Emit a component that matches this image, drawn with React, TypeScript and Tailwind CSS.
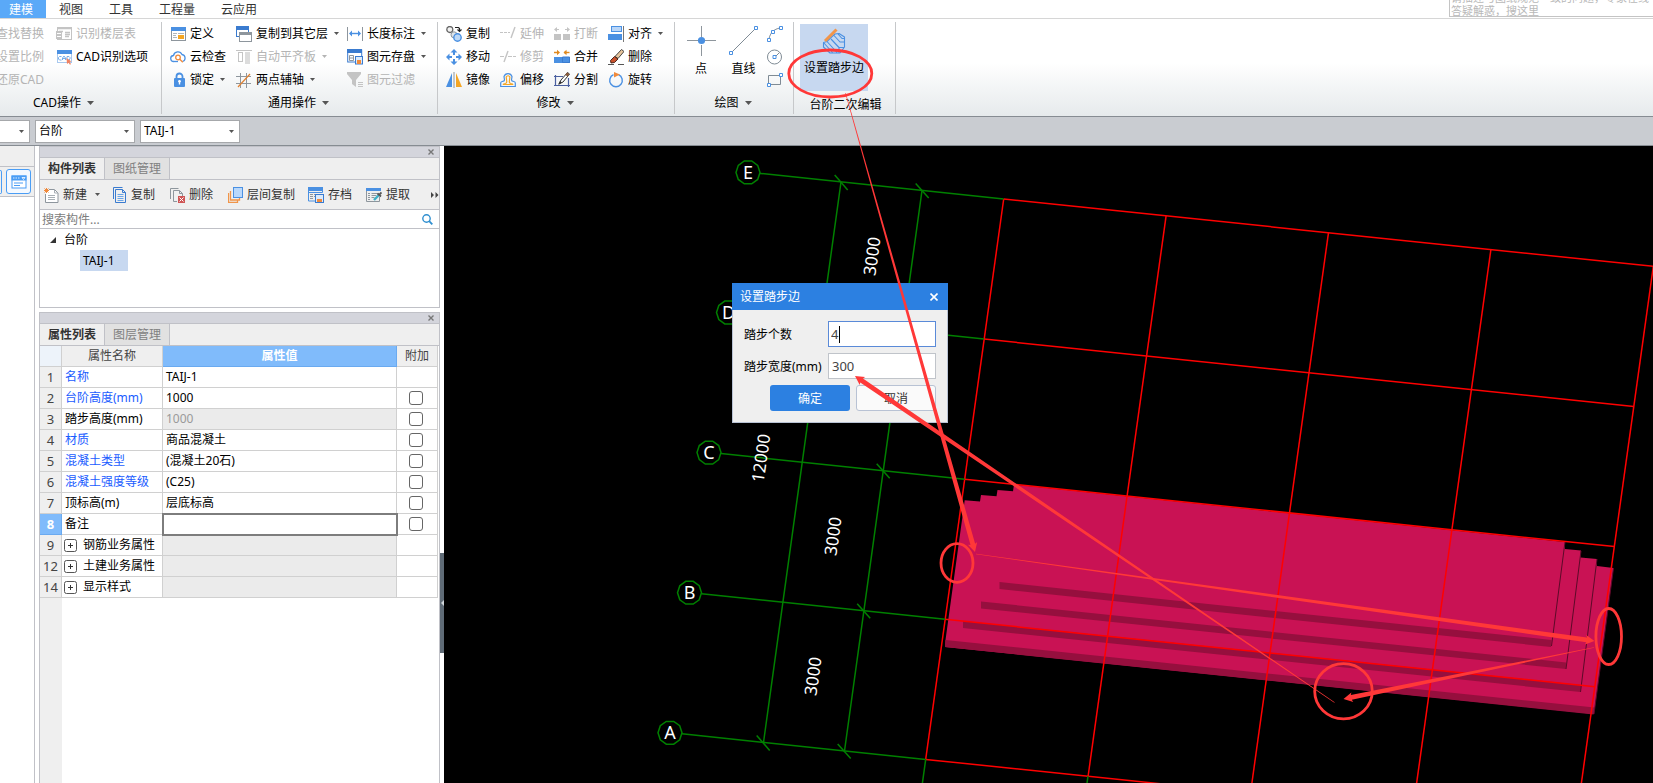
import type { ReactNode } from 'react';

const BLUE = '#4a90e2';
const DEEP = '#3a7bcf';
const GREY = '#8e969d';
const PALE = '#c4c4c4';
const ORANGE = '#f5a623';

function Icon({ children, w = 16, h = 16 }: { children: ReactNode; w?: number; h?: number }) {
  return (
    <svg width={w} height={h} viewBox={`0 0 ${w} ${h}`} fill="none" className="shrink-0" aria-hidden="true">
      {children}
    </svg>
  );
}

function Caret({ big = false, color = '#555555' }: { big?: boolean; color?: string }) {
  return big ? (
    <svg width="7" height="4" viewBox="0 0 7 4" className="shrink-0" aria-hidden="true">
      <path d="M0 0h7L3.5 4z" fill={color} />
    </svg>
  ) : (
    <svg width="5" height="3" viewBox="0 0 5 3" className="shrink-0" aria-hidden="true">
      <path d="M0 0h5L2.5 3z" fill={color} />
    </svg>
  );
}

/* ---------- ribbon icons ---------- */

const icons: Record<string, ReactNode> = {
  floorTable: (
    <Icon>
      <rect x="1.5" y="1.5" width="14" height="12" stroke={PALE} />
      <path d="M1 2.5h15M3 5.5h4M9 6.5h5M9 8.5h5M9 10.5h4" stroke={PALE} strokeWidth="1.4" />
      <rect x="0" y="5" width="6" height="8" fill={PALE} />
      <path d="M1 7.5h4M1 10.5h4" stroke="#fff" />
    </Icon>
  ),
  cadOption: (
    <Icon>
      <rect x="1.5" y="1.5" width="14" height="12" stroke="#a9c9ef" />
      <rect x="1" y="1" width="15" height="4" fill={BLUE} />
      <path d="M5.5 7.5h-2l-1 1v1.500l1 1h2M6.500 11V9l1.500-2 1.500 2v2M6.500 9.500h3M11 7.500v3.500h2l1-1V8.500l-1-1z" stroke="#6aa5e8" strokeWidth=".9" />
      <path d="M10.500 9l5 3.500-2 .5 1.500 2-1 .7-1.500-2-1.500 1.200z" fill="#f08060" />
    </Icon>
  ),
  define: (
    <Icon>
      <rect x="1.500" y="1.500" width="14" height="13" stroke={GREY} fill="#fff" />
      <rect x="1" y="1" width="15" height="4" fill={BLUE} />
      <path d="M3 7.500h4M3 9.500h3M3 11.500h4M8 7.500h6" stroke="#b0b6bb" />
      <rect x="8" y="9" width="6" height="4" fill={ORANGE} />
    </Icon>
  ),
  cloud: (
    <Icon>
      <path d="M4 12.500a3 3 0 0 1-.5-6 4.500 4.500 0 0 1 8.500-1 3.600 3.600 0 0 1 .5 7" stroke={BLUE} strokeWidth="1.300" />
      <circle cx="8" cy="8.500" r="2.300" stroke="#f08a3c" strokeWidth="1.300" />
      <path d="M9.800 10.300l3 3" stroke="#f08a3c" strokeWidth="1.300" />
      <path d="M4 12.500h4" stroke={BLUE} strokeWidth="1.300" />
    </Icon>
  ),
  lock: (
    <Icon>
      <path d="M6.500 7V4.500a3 3 0 0 1 6 0V7" stroke={BLUE} strokeWidth="1.800" />
      <rect x="4" y="6" width="11" height="9" rx="1" fill={BLUE} />
      <path d="M9.500 8.500v4" stroke="#fff" strokeWidth="1.400" />
      <circle cx="9.500" cy="9.300" r="1.300" fill="#fff" />
    </Icon>
  ),
  copyFloor: (
    <Icon>
      <rect x=".5" y=".5" width="12" height="10" stroke={DEEP} fill="#fff" />
      <rect x="0" y="0" width="13" height="4" fill={DEEP} />
      <rect x="3.500" y="6.500" width="12" height="9" stroke={GREY} fill="#fff" />
      <rect x="3" y="6" width="13" height="3" fill={GREY} />
    </Icon>
  ),
  alignSlab: (
    <Icon>
      <path d="M0 1.500h16" stroke={PALE} />
      <rect x="2.500" y="3.500" width="4" height="9" stroke={PALE} />
      <rect x="9" y="3" width="5" height="12" fill="#dcdcdc" />
    </Icon>
  ),
  axis: (
    <Icon>
      <path d="M0 4.500h15M0 11.500h15M4.500 1v15M10.500 1v15" stroke={GREY} />
      <path d="M2 15L14 2" stroke="#e08030" strokeWidth="1.200" />
    </Icon>
  ),
  dimension: (
    <Icon>
      <path d="M.5 1v14M15.500 1v14" stroke={GREY} />
      <path d="M3 7.500h10" stroke={BLUE} strokeWidth="1.400" />
      <path d="M2 7.500l3-3v6zM14 7.500l-3-3v6z" fill={BLUE} />
    </Icon>
  ),
  saveElement: (
    <Icon>
      <rect x=".7" y="1" width="14" height="12" stroke={DEEP} fill="#fff" />
      <rect x="0" y="0" width="15" height="4" fill={DEEP} />
      <path d="M2.500 6.500h4v5h-4zM3 9h3" stroke={GREY} />
      <rect x="8.500" y="7.500" width="7" height="7.500" stroke={DEEP} fill="#dcebfb" />
      <rect x="10" y="11" width="4" height="4" fill="#f08a3c" />
    </Icon>
  ),
  filter: (
    <Icon>
      <path d="M0 0h14v2L9 8v7l-4-3V8L0 2z" fill={PALE} />
      <path d="M11 10.500h5M11 12.500h5M11 14.500h5" stroke={PALE} />
    </Icon>
  ),
  copy: (
    <Icon>
      <circle cx="3.800" cy="3.500" r="3" stroke="#666" strokeWidth="1.300" fill="#f2f2f2" />
      <circle cx="8" cy="8.800" r="3" stroke={GREY} fill="#dce3e9" />
      <circle cx="11.500" cy="11.500" r="3.700" stroke={BLUE} fill="#bcd8f7" strokeWidth="1.400" />
      <path d="M9 1.500h3.500l1 1v2M11.500 3.500l2 2 2-2" stroke="#222" strokeWidth="1.200" />
    </Icon>
  ),
  move: (
    <Icon>
      <path d="M8 0l3.500 3.500H9V6H7V3.500H4.500zM8 16l3.500-3.500H9V10H7v2.500H4.500zM0 8l3.500-3.500V7H6v2H3.500v2.500zM16 8l-3.500-3.500V7H10v2h2.500v2.500z" fill={BLUE} />
    </Icon>
  ),
  mirror: (
    <Icon>
      <path d="M6 1v14H0z" fill={BLUE} />
      <path d="M10 1v14h6z" fill={ORANGE} />
      <path d="M8 0v16" stroke={GREY} />
    </Icon>
  ),
  extend: (
    <Icon>
      <path d="M0 6.500h10" stroke={PALE} strokeDasharray="3 1" />
      <path d="M11 12l4-11" stroke={PALE} strokeWidth="1.400" />
    </Icon>
  ),
  trim: (
    <Icon>
      <path d="M0 7.500h5M8 7.500h8" stroke={PALE} strokeDasharray="4 1" strokeWidth="1.200" />
      <path d="M4 13L8 2" stroke={PALE} strokeWidth="1.400" />
    </Icon>
  ),
  offset: (
    <Icon>
      <path d="M.7 14.500v-3.500q0-1.300 1.500-1.500 2.300-.3 2.300-1.500l-.5-3.500a4.200 4.200 0 0 1 8 0l-.5 3.500q0 1.200 2.300 1.500 1.500.2 1.500 1.500v3.500z" stroke={BLUE} strokeWidth="1.200" />
      <path d="M3.300 12.500q0-.8 2-1 1.500-.3 1.500-1.700l-.6-4.800a2 2 0 0 1 3.700 0l-.6 4.800q0 1.400 1.500 1.700 2 .2 2 1z" stroke={ORANGE} strokeWidth="1.200" />
    </Icon>
  ),
  breakIt: (
    <Icon>
      <path d="M0 8h7v6H0zM9 8h7v6H9z" fill={PALE} />
      <path d="M1 3.500h4M11 3.500h4" stroke={PALE} />
      <path d="M0 3.500L3 1v5zM16 3.500L13 1v5z" fill={PALE} />
    </Icon>
  ),
  merge: (
    <Icon>
      <path d="M0 8h16v6H0z" fill={BLUE} />
      <path d="M8.500 8h7v5.500h-7z" stroke={DEEP} />
      <path d="M0 3.500h3M10 3.500h3" stroke="#e08a20" strokeWidth="1.400" />
      <path d="M6 3.500L3 .8v5.400zM9.500 3.500l3-2.700v5.400z" fill="#e08a20" />
      <path d="M12 3.500h3.500" stroke="#e08a20" strokeWidth="1.400" />
    </Icon>
  ),
  split: (
    <Icon>
      <path d="M1.500 3v11M0 4.500h9M0 13.500h16M14.500 6v9" stroke="#4a5fa0" strokeWidth="1.200" />
      <path d="M5 12l2-4 6.500-7.500 2 1.500L9 10z" stroke="#333" fill="#fff" />
      <path d="M13 .5L15.500 2 13.500 4.500 11.200 2.800z" fill="#8a5a3a" />
      <path d="M4 13l2-4 2 1.500z" fill="#333" />
    </Icon>
  ),
  align: (
    <Icon>
      <rect x="3.500" y=".5" width="10" height="5" stroke={BLUE} fill="#b9d6f8" />
      <rect x="0" y="8" width="14" height="6" fill={BLUE} />
      <path d="M15.500 0v16" stroke="#777" />
    </Icon>
  ),
  erase: (
    <Icon>
      <path d="M0 15.500h6M10 15.500h6" stroke="#555" />
      <path d="M7 7.500L13.500.5l2.500 2L10 9.500z" fill="#e6c49c" stroke="#333" strokeWidth=".9" />
      <path d="M2.500 11.500L6.500 7.500l3.500 2.500-3.500 3.500-3.500.5z" fill="#c8512c" stroke="#3a1a10" strokeWidth=".9" />
    </Icon>
  ),
  rotate: (
    <Icon>
      <path d="M10.500 2.600a6.300 6.300 0 1 1-5 0" stroke={BLUE} strokeWidth="1.400" />
      <path d="M6 0l6 2.500L6 5.500z" fill="#f08a3c" />
    </Icon>
  ),
};

type Command = { icon: string; label: string; menu?: boolean; off?: boolean };

function Cmd({ icon, label, menu, off }: Command) {
  return (
    <button type="button" disabled={off} className={`flex items-center gap-1 whitespace-nowrap text-left ${off ? 'text-[#b4b4b4]' : 'text-black'}`}>
      {icons[icon]}
      <span>{label}</span>
      {menu && <span className="pl-0.5"><Caret color={off ? '#b4b4b4' : '#555555'} /></span>}
    </button>
  );
}

function Group({ title, caret = true, className = '', titleClass = '', children }: { title: string; caret?: boolean; className?: string; titleClass?: string; children: ReactNode }) {
  return (
    <section className={`mb-0.5 mt-[3px] flex shrink-0 flex-col border-r border-[#c6c8ca] ${className}`}>
      <div className="h-[71px]">{children}</div>
      <h2 className={`flex h-[22px] items-center justify-center gap-1.5 ${titleClass}`}>
        {title}
        {caret && <Caret big />}
      </h2>
    </section>
  );
}

const generalCommands: Command[] = [
  { icon: 'define', label: '定义' },
  { icon: 'copyFloor', label: '复制到其它层', menu: true },
  { icon: 'dimension', label: '长度标注', menu: true },
  { icon: 'cloud', label: '云检查' },
  { icon: 'alignSlab', label: '自动平齐板', menu: true, off: true },
  { icon: 'saveElement', label: '图元存盘', menu: true },
  { icon: 'lock', label: '锁定', menu: true },
  { icon: 'axis', label: '两点辅轴', menu: true },
  { icon: 'filter', label: '图元过滤', off: true },
];

const modifyCommands: Command[] = [
  { icon: 'copy', label: '复制' },
  { icon: 'extend', label: '延伸', off: true },
  { icon: 'breakIt', label: '打断', off: true },
  { icon: 'align', label: '对齐', menu: true },
  { icon: 'move', label: '移动' },
  { icon: 'trim', label: '修剪', off: true },
  { icon: 'merge', label: '合并' },
  { icon: 'erase', label: '删除' },
  { icon: 'mirror', label: '镜像' },
  { icon: 'offset', label: '偏移' },
  { icon: 'split', label: '分割' },
  { icon: 'rotate', label: '旋转' },
];

function MenuBar() {
  return (
    <header className="flex h-[19px] shrink-0 overflow-hidden border-b border-[#d6d6d6] bg-white">
      <nav className="flex text-[12px] leading-[20px] text-[#333333]">
        <a href="#model" className="w-[46px] bg-[#5aa9f8] pl-[9px] text-white">建模</a>
        <a href="#view" className="ml-[13px] w-[50px]">视图</a>
        <a href="#tools" className="w-[50px]">工具</a>
        <a href="#quantity" className="w-[62px]">工程量</a>
        <a href="#cloud">云应用</a>
      </nav>
      <div className="ml-auto h-[17px] w-[204px] overflow-hidden border border-r-0 border-t-0 border-[#c4c4c4] pl-px text-[11px] leading-[13px] text-[#b8b8b8]">
        <p className="-mt-[9px] whitespace-nowrap">请描述与图纸规范一致的问题，专家在线<br />答疑解惑，搜这里</p>
      </div>
    </header>
  );
}

function Ribbon() {
  return (
    <div className="flex h-[98px] shrink-0 overflow-hidden border-b border-[#868c92] bg-linear-to-b from-white from-45% to-[#e6eaec]">
      <Group title="CAD操作" className="w-[162px]" titleClass="pr-[34px]">
        <div className="grid grid-cols-[56px_1fr] grid-rows-[repeat(3,23px)]">
          <button type="button" disabled className="flex w-11 items-center justify-end overflow-hidden whitespace-nowrap text-[#b4b4b4]">查找替换</button>
          <Cmd icon="floorTable" label="识别楼层表" off />
          <button type="button" disabled className="flex w-11 items-center justify-end overflow-hidden whitespace-nowrap text-[#b4b4b4]">设置比例</button>
          <Cmd icon="cadOption" label="CAD识别选项" />
          <button type="button" disabled className="flex w-11 items-center justify-end overflow-hidden whitespace-nowrap text-[#b4b4b4]">还原CAD</button>
        </div>
      </Group>
      <Group title="通用操作" className="w-[276px]" titleClass="pr-0.5">
        <div className="grid grid-cols-[66px_111px_auto] grid-rows-[repeat(3,23px)] pl-2">
          {generalCommands.map((c) => <Cmd key={c.label} {...c} />)}
        </div>
      </Group>
      <Group title="修改" className="w-[237px]" titleClass="pr-0.5">
        <div className="grid grid-cols-[54px_54px_54px_auto] grid-rows-[repeat(3,23px)] pl-2">
          {modifyCommands.map((c) => <Cmd key={c.label} {...c} />)}
        </div>
      </Group>
      <Group title="绘图" className="w-[119px]" titleClass="pr-0.5">
        <div className="flex pl-3">
          <button type="button" className="flex w-[28px] flex-col items-center gap-1 pt-1">
            <Icon w={29} h={30}>
              <path d="M14.500 0v11M14.500 19v11M0 14.500h11M18 14.500h11" stroke={GREY} />
              <circle cx="14.500" cy="14.500" r="3.600" fill={BLUE} />
            </Icon>
            <span>点</span>
          </button>
          <button type="button" className="ml-[14px] flex w-[29px] flex-col items-center gap-1 pt-1">
            <Icon w={29} h={30}>
              <path d="M3 26L26 3" stroke="#7f8b95" />
              <path d="M.5 25.500h3v3h-3zM25.500.5h3v3h-3z" stroke={BLUE} fill="#fff" />
            </Icon>
            <span>直线</span>
          </button>
          <div className="ml-[9px] grid grid-rows-[repeat(3,23px)] items-center">
            <button type="button" aria-label="弧线">
              <Icon>
                <path d="M2 13C3 7 7 3 13 2" stroke="#7f8b95" />
                <path d="M.5 12.500h3v3h-3zM4.500 4.500h3v3h-3zM12.500.5h3v3h-3z" stroke={BLUE} fill="#fff" />
              </Icon>
            </button>
            <button type="button" aria-label="圆">
              <Icon>
                <circle cx="7.500" cy="8" r="7" stroke="#7f8b95" />
                <path d="M8 8l4-4" stroke="#7f8b95" />
                <path d="M6 6.500h3v3H6z" stroke={BLUE} fill="#fff" />
              </Icon>
            </button>
            <button type="button" aria-label="矩形">
              <Icon>
                <path d="M1.500 3.500h12v9h-12z" stroke="#7f8b95" />
                <path d="M.5 11.500h3v3h-3zM12.500 1.500h3v3h-3z" stroke={BLUE} fill="#fff" />
              </Icon>
            </button>
          </div>
        </div>
      </Group>
      <Group title="台阶二次编辑" caret={false} className="w-[102px]" titleClass="pl-0.5 pt-1">
        <button type="button" className="ml-1.5 mt-0.5 flex h-[67px] w-[68px] flex-col items-center gap-1 bg-[#c7d8f0] pt-1">
          <Icon w={24} h={28}>
            <path d="M1.500 14.500L5 13.500L9 9.500L13 6L17 5.500L22.500 9V19L18 25H8L1.500 19zM5 13.500L15 24.500M9 11L17 19.500V25M12 7.500L18 14H22.500M16 6L20 10.500H22.500M1.500 14.500L10.500 24.500M17 19.500H22" stroke={BLUE} strokeWidth="1.100" strokeLinejoin="round" />
            <path d="M3 13L14.500 1.500" stroke="#f2954a" strokeWidth="3" />
          </Icon>
          <span className="leading-4">设置踏步边</span>
        </button>
      </Group>
    </div>
  );
}

function Combo({ label, value, className }: { label: string; value: string; className: string }) {
  return (
    <div className={`relative flex h-[23px] items-center ${className}`}>
      <select aria-label={label} className="h-full w-full appearance-none border border-[#a6a8ab] bg-white pl-[3px] leading-4 outline-none">
        <option>{value}</option>
      </select>
      <span className="pointer-events-none absolute right-1.5 flex"><Caret /></span>
    </div>
  );
}

function PanelTop({ tabs }: { tabs: [string, string] }) {
  return (
    <>
      <div className="flex h-[11px] shrink-0 items-center justify-end border-b border-[#c0c1c7] bg-[#d4d5dc] pr-[5px]">
        <button type="button" aria-label="关闭" className="flex">
          <svg width="6" height="6" viewBox="0 0 6 6" aria-hidden="true"><path d="M.5.5l5 5M5.500.5l-5 5" stroke="#777" strokeWidth="1.400" /></svg>
        </button>
      </div>
      <div role="tablist" className="flex h-[22px] shrink-0 border-b border-[#c0c1c7] bg-[#efefef]">
        <button type="button" role="tab" aria-selected="true" className="w-[65px] border-r border-[#c0c1c7] font-bold text-[#333333]">{tabs[0]}</button>
        <button type="button" role="tab" aria-selected="false" className="w-[65px] border-r border-[#c0c1c7] bg-[#e1e1e1] text-[#808080]">{tabs[1]}</button>
      </div>
    </>
  );
}

function ComponentPanel() {
  return (
    <section className="flex h-[162px] shrink-0 flex-col border border-[#c0c1c7] bg-white">
      <PanelTop tabs={['构件列表', '图纸管理']} />
      <div className="flex h-[30px] shrink-0 items-center border-b border-[#c0c1c7] bg-[#efefef] text-[#333333]">
        <button type="button" className="ml-1 flex w-[68px] items-center gap-1">
          <Icon w={15}>
            <path d="M5 2.500h5.500l3.500 3.500v9.500H1.500V7" stroke={GREY} fill="#fff" />
            <path d="M10.500 2.500V6H14M4 8.500h7M4 10.500h7M4 12.500h7" stroke="#a8afb5" />
            <path d="M.5 1.500l4 4M4.500 1.500l-4 4M2.500 1v5M0 3.500h5" stroke="#f08a3c" />
          </Icon>
          <span>新建</span>
          <span className="pl-1"><Caret /></span>
        </button>
        <button type="button" className="flex w-[58px] items-center gap-1 pl-px">
          <Icon w={14}>
            <path d="M.5 12V.5h9M2.500 14V2.500h7l3 3v10h-10zM9.500 2.500v3h3" stroke={DEEP} />
            <path d="M4.500 7.500h6M4.500 9.500h6M4.500 11.500h6M4.500 13.500h6" stroke="#6aa5e8" />
          </Icon>
          <span>复制</span>
        </button>
        <button type="button" className="flex w-[57px] items-center gap-1">
          <Icon w={15}>
            <path d="M.5 12V1.500h8M3.500 14.500v-11h6l3 3V9M9.500 3.500v3h3M3.500 14.500H7" stroke={GREY} />
            <rect x="8" y="9" width="7" height="7" fill="#cf5555" />
            <path d="M9.500 10.500l4 4M13.500 10.500l-4 4" stroke="#fff" />
          </Icon>
          <span>删除</span>
        </button>
        <button type="button" className="flex w-[81px] items-center gap-1 pl-px">
          <Icon w={15}>
            <path d="M.5 6v9.500h9v-3M2.500 4v9h9v-2" stroke="#f0954a" strokeWidth="1.300" />
            <rect x="5.500" y=".5" width="9" height="10" stroke={BLUE} fill="#b9d8fb" />
          </Icon>
          <span>层间复制</span>
        </button>
        <button type="button" className="flex w-[58px] items-center gap-1">
          <Icon>
            <path d="M.5 1v13h8M.5 5.500h14V1" stroke={BLUE} />
            <rect x="0" y="0" width="15" height="4" fill={BLUE} />
            <path d="M2 7.500h3M6 7.500h3M2 9.500h3M2 11.500h3M6 9.500h1" stroke={GREY} />
            <rect x="7.500" y="7.500" width="8" height="8" stroke={DEEP} fill="#dcebfb" />
            <rect x="9" y="12" width="5" height="3" fill="#f08a3c" />
          </Icon>
          <span>存档</span>
        </button>
        <button type="button" className="flex items-center gap-1">
          <Icon>
            <path d="M.5 2v12.500h13V10" stroke={GREY} />
            <rect x="0" y="1" width="15" height="3" fill={BLUE} />
            <path d="M2 6.500h2M5.500 6.500h7M2 8.500h2M5.500 8.500h5M2 10.500h2M5.500 10.500h3M2 12.500h2" stroke={GREY} />
            <path d="M8 13l5-5" stroke="#3fb0c8" strokeWidth="2.400" />
            <path d="M11.500 6.500l3.500 3M13 8l2.500-2.500" stroke="#555" strokeWidth="1.800" />
          </Icon>
          <span>提取</span>
        </button>
        <button type="button" aria-label="更多" className="ml-auto">
          <svg width="8" height="6" viewBox="0 0 8 6" aria-hidden="true"><path d="M0 0l3 3-3 3zM4.500 0l3 3-3 3z" fill="#444" /></svg>
        </button>
      </div>
      <div className="flex h-[19px] shrink-0 items-center border-b border-[#c0c1c7] bg-white pr-1.5">
        <input type="text" aria-label="搜索构件" placeholder="搜索构件..." className="h-full min-w-0 flex-1 pl-0.5 outline-none placeholder:text-[#7d7d7d]" />
        <svg width="11" height="11" viewBox="0 0 11 11" fill="none" aria-hidden="true">
          <circle cx="4.500" cy="4.500" r="3.700" stroke="#2f8fd0" strokeWidth="1.400" />
          <path d="M7.200 7.200L10.300 10.300" stroke="#2f8fd0" strokeWidth="1.800" />
        </svg>
      </div>
      <ul className="flex-1 leading-[21px]">
        <li>
          <div className="flex h-[21px] items-center gap-2 pl-[10px]">
            <svg width="6" height="6" viewBox="0 0 6 6" aria-hidden="true"><path d="M6 0v6H0z" fill="#333" /></svg>
            <span>台阶</span>
          </div>
          <ul>
            <li className="ml-10 h-[21px] w-12 bg-[#c7d8f0] pl-[3px]">TAIJ-1</li>
          </ul>
        </li>
      </ul>
    </section>
  );
}

type Row = { n: number; name: string; value?: string; blue?: boolean; grey?: boolean; check?: boolean; group?: boolean; active?: boolean };

const rows: Row[] = [
  { n: 1, name: '名称', value: 'TAIJ-1', blue: true },
  { n: 2, name: '台阶高度(mm)', value: '1000', blue: true, check: true },
  { n: 3, name: '踏步高度(mm)', value: '1000', grey: true, check: true },
  { n: 4, name: '材质', value: '商品混凝土', blue: true, check: true },
  { n: 5, name: '混凝土类型', value: '(混凝土20石)', blue: true, check: true },
  { n: 6, name: '混凝土强度等级', value: '(C25)', blue: true, check: true },
  { n: 7, name: '顶标高(m)', value: '层底标高', check: true },
  { n: 8, name: '备注', check: true, active: true },
  { n: 9, name: '钢筋业务属性', grey: true, group: true },
  { n: 12, name: '土建业务属性', grey: true, group: true },
  { n: 14, name: '显示样式', grey: true, group: true },
];

function PropertyPanel() {
  return (
    <section className="flex min-h-0 flex-1 flex-col border border-b-0 border-[#c0c1c7] bg-white">
      <PanelTop tabs={['属性列表', '图层管理']} />
      <table className="w-[398px] table-fixed border-separate border-spacing-0 leading-4">
        <colgroup>
          <col className="w-[22px]" />
          <col className="w-[101px]" />
          <col />
          <col className="w-[41px]" />
        </colgroup>
        <thead>
          <tr className="h-[21px] bg-[#efefef] text-[#444444]">
            <th className="border-b border-r border-[#d0d0d0] bg-[#edf3fa] p-0" />
            <th className="border-b border-r border-[#d0d0d0] p-0 font-normal">属性名称</th>
            <th className="border-b border-r border-[#6aaaf0] bg-[#80bbfb] p-0 font-bold text-white">属性值</th>
            <th className="border-b border-r border-[#d0d0d0] p-0 font-normal">附加</th>
          </tr>
        </thead>
        <tbody>
          {rows.map((r) => (
            <tr key={r.n} className="h-[21px]">
              <th className={`border-b border-r p-0 text-[13px] ${r.active ? 'border-[#6aaaf0] bg-[#80bbfb] font-bold text-white' : 'border-[#d0d0d0] bg-[#efefef] font-normal text-[#444444]'}`}>{r.n}</th>
              <td className={`whitespace-nowrap border-b border-r border-[#d0d0d0] p-0 ${r.blue ? 'text-[#1a5cff]' : 'text-black'}`}>
                {r.group ? (
                  <button type="button" className="flex items-center gap-1.5 pl-0.5">
                    <svg width="13" height="13" viewBox="0 0 13 13" fill="none" aria-hidden="true">
                      <rect x=".5" y=".5" width="12" height="12" rx="2" stroke="#555" fill="#fff" />
                      <path d="M4 6.500h5M6.500 4v5" stroke="#333" />
                    </svg>
                    <span>{r.name}</span>
                  </button>
                ) : (
                  <span className="pl-[3px]">{r.name}</span>
                )}
              </td>
              <td className={`border-b border-r border-[#d0d0d0] p-0 ${r.grey ? 'bg-[#ebebeb] text-[#9a9a9a]' : 'text-black'} ${r.active ? 'outline-2 -outline-offset-1 outline-[#7d7d7d]' : ''}`}>
                {r.active ? (
                  <input type="text" aria-label="备注" className="block h-4 w-full px-1 outline-none" />
                ) : (
                  <span className="pl-[3px]">{r.value}</span>
                )}
              </td>
              <td className="border-b border-r border-[#d0d0d0] p-0">
                {r.check && <input type="checkbox" aria-label={`${r.name} 附加`} className="ml-3 block size-[14px] appearance-none rounded-[3px] border border-[#666666] bg-white" />}
              </td>
            </tr>
          ))}
        </tbody>
      </table>
      <div className="w-[22px] flex-1 bg-[#efefef]" />
    </section>
  );
}

/* ---------- drawing area ---------- */

const node = (row: number, col: number): [number, number] => [1003.700 + col * 162.400 - row * 19.500, 199 + col * 16.850 + row * 140.100];
const axes = ['E', 'D', 'C', 'B', 'A'];

function Drawing() {
  const dims = [
    { x: 878, y: 257, t: '3000' },
    { x: 767, y: 459, t: '12000' },
    { x: 839, y: 537, t: '3000' },
    { x: 819, y: 677, t: '3000' },
  ];
  return (
    <svg viewBox="444 146 1209 637" preserveAspectRatio="xMinYMin slice" className="h-full w-full" aria-label="轴网与台阶">
      <path d="M964.700 500.300L980 501.500L981 495L996.500 496.300L997.500 490L1013 491.300L1014 484.500L1565 542L1565 549L1581 550.500L1580.500 557.500L1597 559L1597 566L1613.500 568L1594 714L945 647L945.500 640z" fill="#c91254" />
      <g fill="#960f3e">
        <path d="M945.500 640L1594.500 707.500L1593.500 714.500L945 647z" />
        <path d="M999.500 582L1551.500 640L1551 647L999.500 589z" />
        <path d="M981 601.500L1566 662.500L1566 669L981 608.500z" />
        <path d="M963 621L1581 685L1580.500 692L963 628z" />
      </g>
      <path d="M1565 542L1551.500 646M1581 551L1566 669M1597 559L1580.500 692M1613.500 568L1594 714" stroke="#5c0a28" fill="none" />
      <g stroke="#ff0000" strokeWidth="1.500">
        {axes.map((a, r) => {
          const [x1, y1] = node(r, 0);
          const [x2, y2] = node(r, 4);
          return <line key={a} x1={x1} y1={y1} x2={x2} y2={y2} />;
        })}
        {[0, 1, 2, 3, 4].map((c) => {
          const [x1, y1] = node(0, c);
          const [x2, y2] = node(4, c);
          return <line key={c} x1={x1} y1={y1} x2={x2} y2={y2} />;
        })}
      </g>
      <g stroke="#008000" strokeWidth="1.500" fill="none">
        {axes.map((a, r) => {
          const [x, y] = node(r, 0);
          const cx = x - 255.700;
          const cy = y - 26.600;
          const pts = Array.from({ length: 10 }, (_, i) => {
            const t = (i * Math.PI) / 5;
            return `${cx + 12 * Math.cos(t)},${cy + 12 * Math.sin(t)}`;
          }).join(' ');
          return (
            <g key={a}>
              <polygon points={pts} />
              <line x1={cx + 12} y1={cy + 1} x2={x} y2={y} />
              <line x1={x - 88} y1={y - 15.500} x2={x - 75} y2={y - 1} />
              {(r === 0 || r === 4) && <line x1={x - 169} y1={y - 24} x2={x - 156} y2={y - 9} />}
            </g>
          );
        })}
        <path d="M841 182L763.500 742.500M922 190.500L844.500 751" />
        <path d="M925.700 759.400L922 786M1088 776.200L1086.500 787" />
      </g>
      <g fill="#ffffff" fontFamily="'Noto Sans', 'Noto Sans CJK SC', sans-serif" textAnchor="middle">
        {axes.map((a, r) => {
          const [x, y] = node(r, 0);
          return <text key={a} x={x - 255.700} y={y - 20} fontSize="18">{a}</text>;
        })}
        {dims.map((d) => (
          <text key={`${d.x}`} x={d.x} y={d.y} fontSize="17" transform={`rotate(-82 ${d.x} ${d.y})`}>{d.t}</text>
        ))}
      </g>
    </svg>
  );
}

function StepDialog() {
  return (
    <form role="dialog" aria-label="设置踏步边" className="absolute left-[288px] top-[137px] w-[216px] border border-t-0 border-[#b8c2d4] bg-[#efefef]" onSubmit={(e) => e.preventDefault()}>
      <div className="-mx-px flex h-[27px] items-center justify-between bg-[#2c80e1] pl-2 pr-[10px] text-white">
        <span>设置踏步边</span>
        <button type="button" aria-label="关闭">
          <svg width="8" height="8" viewBox="0 0 8 8" aria-hidden="true"><path d="M.5.5l7 7M7.500.5l-7 7" stroke="#fff" strokeWidth="1.600" /></svg>
        </button>
      </div>
      <div className="grid grid-cols-[84px_108px] gap-y-1.5 pl-[11px] pt-[11px] leading-4">
        <label htmlFor="step-count" className="self-center pt-0.5">踏步个数</label>
        <div className="flex h-[26px] items-center border border-[#5a8ad8] bg-white pl-0.5">
          <input id="step-count" type="text" defaultValue="4" className="w-2 text-[13px] text-[#444444] outline-none" />
          <span className="h-[17px] w-px bg-black" />
        </div>
        <label htmlFor="step-width" className="self-center whitespace-nowrap pt-0.5">踏步宽度(mm)</label>
        <input id="step-width" type="text" defaultValue="300" className="h-[26px] min-w-0 border border-[#c0c4ca] bg-white pl-[3px] text-[13px] text-[#444444] outline-none" />
      </div>
      <div className="flex justify-end gap-1.5 pb-[11px] pr-[11px] pt-1.5">
        <button type="submit" className="h-[26px] w-20 rounded-[3px] bg-[#2c80e1] pt-0.5 text-white">确定</button>
        <button type="button" className="h-[26px] w-20 rounded-[3px] border border-[#b8c2d4] bg-[#fafafa] pt-0.5 text-[#333333]">取消</button>
      </div>
    </form>
  );
}

/* ---------- callouts above the whole window ---------- */

function taper(x1: number, y1: number, x2: number, y2: number) {
  const len = Math.hypot(x2 - x1, y2 - y1);
  const ux = (x2 - x1) / len;
  const uy = (y2 - y1) / len;
  const at = (along: number, side: number) => `${x1 + ux * along - uy * side},${y1 + uy * along + ux * side}`;
  return [at(0, 0.3), at(len - 8, 2.4), at(len - 9, 4.8), at(len, 0), at(len - 9, -4.8), at(len - 8, -2.4), at(0, -0.3)].join(' ');
}

function Callouts() {
  return (
    <svg viewBox="0 0 1653 783" preserveAspectRatio="xMinYMin slice" className="pointer-events-none absolute inset-0 h-full w-full" aria-hidden="true">
      <g fill="none" stroke="#ff3838" strokeWidth="2.800">
        <ellipse cx="830.300" cy="73.500" rx="41.500" ry="23.500" />
        <ellipse cx="957" cy="563" rx="16" ry="19.300" />
        <ellipse cx="1608.700" cy="636.500" rx="12.800" ry="28" />
        <ellipse cx="1343.500" cy="691.300" rx="28.800" ry="27.600" />
      </g>
      <g fill="#ff3838">
        <polygon points={taper(845.500, 93, 975, 552)} />
        <polygon points={taper(976, 554, 1594.500, 641)} />
        <polygon points={taper(1594, 647.500, 1343.500, 699)} />
        <polygon points={taper(1334.500, 702.500, 855, 376)} />
      </g>
    </svg>
  );
}

export default function App() {
  return (
    <div className="relative flex h-screen flex-col overflow-hidden bg-white font-['Noto_Sans','Noto_Sans_CJK_SC',sans-serif] text-[12px] leading-[18px] text-black">
      <MenuBar />
      <Ribbon />
      <div className="flex h-[29px] shrink-0 items-center gap-[5px] border-b border-[#868c92] bg-[#c9ccd1]">
        <Combo label="楼层" value="" className="-ml-1 w-[34px]" />
        <Combo label="构件类型" value="台阶" className="w-[100px]" />
        <Combo label="构件" value="TAIJ-1" className="w-[100px]" />
      </div>
      <main className="flex min-h-0 flex-1">
        <aside className="w-[35px] shrink-0 border-r border-[#c0c1c7] bg-white">
          <div className="h-[21px] border-b border-[#c0c1c7] bg-[#efefef]" />
          <div className="flex h-[30px] items-center gap-1 border-b border-[#c0c1c7] bg-[#efefef]">
            <span className="h-6 w-0.5 rounded-r-sm border border-l-0 border-[#4a9df5]" />
            <button type="button" aria-label="列表视图" className="flex size-[25px] items-center justify-center rounded-[3px] border border-[#4a9df5] bg-[#f4f9ff]">
              <Icon h={14}>
                <rect x="1" y="1" width="14" height="12" stroke="#4a9df5" fill="#fff" />
                <rect x=".5" y=".5" width="15" height="5" fill="#4a9df5" />
                <path d="M3 8h9M3 10.500h6" stroke="#4a9df5" />
                <path d="M2 3h1.500M4.500 3H6M7 3h1.500M11 2.500h3l-1.500 2z" stroke="#fff" strokeWidth=".8" />
              </Icon>
            </button>
          </div>
        </aside>
        <div className="ml-1 flex w-[401px] shrink-0 flex-col gap-1">
          <ComponentPanel />
          <PropertyPanel />
        </div>
        <div className="flex w-1 shrink-0 flex-col pt-[407px]">
          <button type="button" aria-label="折叠面板" className="flex h-[100px] w-1 items-center justify-center bg-[#5f6b76]">
            <svg width="3" height="6" viewBox="0 0 3 6" aria-hidden="true"><path d="M3 0v6L0 3z" fill="#cfd5da" /></svg>
          </button>
        </div>
        <section className="relative min-w-0 flex-1 overflow-hidden bg-black">
          <Drawing />
          <StepDialog />
        </section>
      </main>
      <Callouts />
    </div>
  );
}
